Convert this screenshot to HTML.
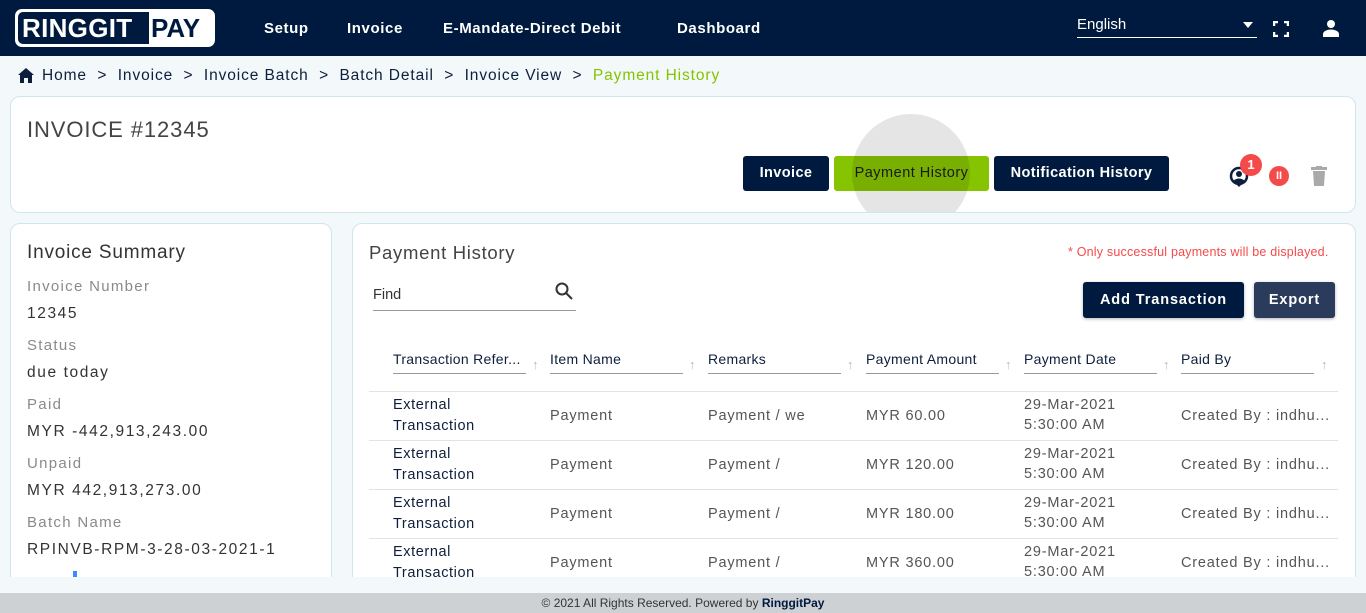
<!DOCTYPE html>
<html><head><meta charset="utf-8"><style>
*{box-sizing:border-box;margin:0;padding:0}
body{width:1366px;height:613px;overflow:hidden;background:#f3f8fb;font-family:"Liberation Sans",sans-serif;position:relative;color:#333}
.a{position:absolute;white-space:nowrap}
.hdr{left:0;top:0;width:1366px;height:56px;background:#001a3f}
.nav{color:#fff;font-weight:bold;font-size:15px;top:20px;letter-spacing:0.6px}
.bc{top:67px;font-size:15.5px;color:#0d1f3c;letter-spacing:0.9px}
.card{background:#fff;border:1px solid #cfe6ef;border-radius:10px}
.btn{top:156px;height:35px;border-radius:3px;font-size:14.5px;font-weight:bold;color:#fff;background:#001a3f;text-align:center;line-height:35px;letter-spacing:0.4px}
.lbl{font-size:15px;color:#8a8a8a;left:27px;letter-spacing:1.3px}
.val{font-size:15.5px;color:#333;left:27px;letter-spacing:1.6px}
.th{font-size:14px;color:#0d1f3c;top:351px;border-bottom:1px solid #999;height:23px;width:133px;letter-spacing:0.3px;overflow:hidden}
.ar{color:#bbb;font-size:13px;top:357px}
.hl{left:369px;width:969px;height:1px;background:#e3e3e3}
.c1{font-size:14.5px;color:#0d1f3c;line-height:21px;letter-spacing:0.6px}
.c{font-size:14.5px;color:#555;line-height:20px;letter-spacing:0.8px}
</style></head><body>
<div class="a hdr"></div>
<div class="a" style="left:15px;top:9px;width:200px;height:38px;background:#fff;border-radius:7px"></div>
<div class="a" style="left:18px;top:12px;width:131px;height:32px;background:#001a3f;border-radius:5px 0 0 5px;color:#fff;font-size:26px;font-weight:bold;line-height:32px;padding-left:4px;letter-spacing:0.3px">RINGGIT</div>
<div class="a" style="left:151px;top:12px;color:#001a3f;font-size:26px;font-weight:bold;line-height:32px">PAY</div>
<div class="a nav" style="left:264px">Setup</div>
<div class="a nav" style="left:347px">Invoice</div>
<div class="a nav" style="left:443px">E-Mandate-Direct Debit</div>
<div class="a nav" style="left:677px">Dashboard</div>
<div class="a" style="left:1077px;top:16px;color:#fff;font-size:15px">English</div>
<div class="a" style="left:1077px;top:37px;width:180px;height:1px;background:#fff"></div>
<div class="a" style="left:1243px;top:22px;width:0;height:0;border-left:5px solid transparent;border-right:5px solid transparent;border-top:6px solid #fff"></div>
<svg class="a" style="left:1273px;top:21px" width="16" height="16" viewBox="0 0 16 16" fill="none" stroke="#fff" stroke-width="2.5"><path d="M1 5V1h4M11 1h4v4M15 11v4h-4M5 15H1v-4"/></svg>
<svg class="a" style="left:1322px;top:19px" width="18" height="18" viewBox="0 0 18 18" fill="#fff"><circle cx="9" cy="5" r="4"/><path d="M1 18v-3c0-3 5-4.5 8-4.5s8 1.5 8 4.5v3z"/></svg>
<svg class="a" style="left:18px;top:68px" width="16" height="15" viewBox="0 0 16 15" fill="#0d1f3c"><path d="M8 0L0 7h2v8h4v-5h4v5h4V7h2z"/></svg>
<div class="a bc" style="left:42px">Home &nbsp;&gt;&nbsp; Invoice &nbsp;&gt;&nbsp; Invoice Batch &nbsp;&gt;&nbsp; Batch Detail &nbsp;&gt;&nbsp; Invoice View &nbsp;&gt;&nbsp; <span style="color:#86c300">Payment History</span></div>
<div class="a card" style="left:10px;top:96px;width:1346px;height:117px;overflow:hidden">
  <div class="a" style="left:823px;top:59px;width:155px;height:35px;background:#86c300;border-radius:3px"></div>
  <div class="a" style="left:841px;top:17px;width:118px;height:118px;border-radius:50%;background:rgba(0,0,0,0.1)"></div>
</div>
<div class="a" style="left:27px;top:117px;font-size:22px;color:#444;letter-spacing:0.9px">INVOICE #12345</div>
<div class="a btn" style="left:743px;width:86px">Invoice</div>
<div class="a btn" style="left:834px;width:155px;background:transparent;color:#1a1a1a;font-weight:normal;letter-spacing:0.5px">Payment History</div>
<div class="a btn" style="left:994px;width:175px">Notification History</div>
<svg class="a" style="left:1229px;top:166px" width="20" height="22" viewBox="0 0 20 22"><circle cx="10" cy="10" r="8" fill="none" stroke="#0d1f3c" stroke-width="2.5"/><circle cx="10" cy="8" r="3" fill="#0d1f3c"/><path d="M4 15q6-5 12 0l-6 6z" fill="#0d1f3c"/></svg>
<div class="a" style="left:1240px;top:154px;width:22px;height:22px;border-radius:50%;background:#f44a4a;color:#fff;font-size:13px;font-weight:bold;text-align:center;line-height:22px">1</div>
<div class="a" style="left:1269px;top:166px;width:20px;height:20px;border-radius:50%;background:#f44a4a;color:#fff;font-size:11px;font-weight:bold;text-align:center;line-height:20px">II</div>
<svg class="a" style="left:1311px;top:166px" width="16" height="20" viewBox="0 0 16 20" fill="#aaa"><rect x="0" y="1" width="16" height="3"/><rect x="5" y="0" width="6" height="2"/><path d="M2 5h12l-1 15H3z"/></svg>

<div class="a card" style="left:10px;top:223px;width:322px;height:370px"></div>
<div class="a" style="left:27px;top:242px;font-size:19px;color:#333;letter-spacing:0.8px">Invoice Summary</div>
<div class="a lbl" style="top:278px">Invoice Number</div><div class="a val" style="top:305px">12345</div>
<div class="a lbl" style="top:337px">Status</div><div class="a val" style="top:364px">due today</div>
<div class="a lbl" style="top:396px">Paid</div><div class="a val" style="top:423px">MYR -442,913,243.00</div>
<div class="a lbl" style="top:455px">Unpaid</div><div class="a val" style="top:482px">MYR 442,913,273.00</div>
<div class="a lbl" style="top:514px">Batch Name</div><div class="a val" style="top:541px">RPINVB-RPM-3-28-03-2021-1</div>
<div class="a" style="left:73px;top:571px;width:4px;height:6px;background:#3b8cff"></div>

<div class="a card" style="left:352px;top:223px;width:1004px;height:370px"></div>
<div class="a" style="left:369px;top:242px;font-size:18.5px;color:#444;letter-spacing:0.7px">Payment History</div>
<div class="a" style="left:1068px;top:245px;font-size:12.5px;color:#f44a4a;letter-spacing:0.2px">* Only successful payments will be displayed.</div>
<div class="a" style="left:373px;top:287px;font-size:14.5px;color:#333">Find</div>
<div class="a" style="left:373px;top:310px;width:203px;height:1px;background:#999"></div>
<svg class="a" style="left:555px;top:282px" width="18" height="18" viewBox="0 0 18 18" fill="none" stroke="#333" stroke-width="2"><circle cx="7" cy="7" r="5.5"/><path d="M11 11l6 6"/></svg>
<div class="a btn" style="left:1083px;top:282px;width:161px;height:36px;line-height:36px;box-shadow:0 1px 3px rgba(0,0,0,.3);letter-spacing:0.9px">Add Transaction</div>
<div class="a btn" style="left:1254px;top:282px;width:81px;height:36px;line-height:36px;background:#2b3b5c;box-shadow:0 1px 3px rgba(0,0,0,.3);letter-spacing:0.9px">Export</div>

<div class="a th" style="left:393px">Transaction Refer...</div><div class="a ar" style="left:532px">↑</div>
<div class="a th" style="left:550px">Item Name</div><div class="a ar" style="left:689px">↑</div>
<div class="a th" style="left:708px">Remarks</div><div class="a ar" style="left:847px">↑</div>
<div class="a th" style="left:866px">Payment Amount</div><div class="a ar" style="left:1005px">↑</div>
<div class="a th" style="left:1024px">Payment Date</div><div class="a ar" style="left:1163px">↑</div>
<div class="a th" style="left:1181px">Paid By</div><div class="a ar" style="left:1321px">↑</div>

<div class="a hl" style="top:391px"></div>
<div class="a hl" style="top:440px"></div>
<div class="a hl" style="top:489px"></div>
<div class="a hl" style="top:538px"></div>

<div class="a c1" style="left:393px;top:395px">External<br>Transaction</div>
<div class="a c" style="left:550px;top:406px">Payment</div><div class="a c" style="left:708px;top:406px">Payment / we</div><div class="a c" style="left:866px;top:406px">MYR 60.00</div><div class="a c" style="left:1024px;top:395px">29-Mar-2021<br>5:30:00 AM</div><div class="a c" style="left:1181px;top:406px">Created By : indhu...</div>
<div class="a c1" style="left:393px;top:444px">External<br>Transaction</div>
<div class="a c" style="left:550px;top:455px">Payment</div><div class="a c" style="left:708px;top:455px">Payment /</div><div class="a c" style="left:866px;top:455px">MYR 120.00</div><div class="a c" style="left:1024px;top:444px">29-Mar-2021<br>5:30:00 AM</div><div class="a c" style="left:1181px;top:455px">Created By : indhu...</div>
<div class="a c1" style="left:393px;top:493px">External<br>Transaction</div>
<div class="a c" style="left:550px;top:504px">Payment</div><div class="a c" style="left:708px;top:504px">Payment /</div><div class="a c" style="left:866px;top:504px">MYR 180.00</div><div class="a c" style="left:1024px;top:493px">29-Mar-2021<br>5:30:00 AM</div><div class="a c" style="left:1181px;top:504px">Created By : indhu...</div>
<div class="a c1" style="left:393px;top:542px">External<br>Transaction</div>
<div class="a c" style="left:550px;top:553px">Payment</div><div class="a c" style="left:708px;top:553px">Payment /</div><div class="a c" style="left:866px;top:553px">MYR 360.00</div><div class="a c" style="left:1024px;top:542px">29-Mar-2021<br>5:30:00 AM</div><div class="a c" style="left:1181px;top:553px">Created By : indhu...</div>

<div class="a" style="left:0;top:577px;width:1366px;height:16px;background:#f3f8fb"></div>
<div class="a" style="left:0;top:593px;width:1366px;height:20px;background:#cdd1d4;text-align:center;font-size:12px;line-height:20px;color:#333">© 2021 All Rights Reserved. Powered by <b style="color:#001a3f">RinggitPay</b></div>
</body></html>
